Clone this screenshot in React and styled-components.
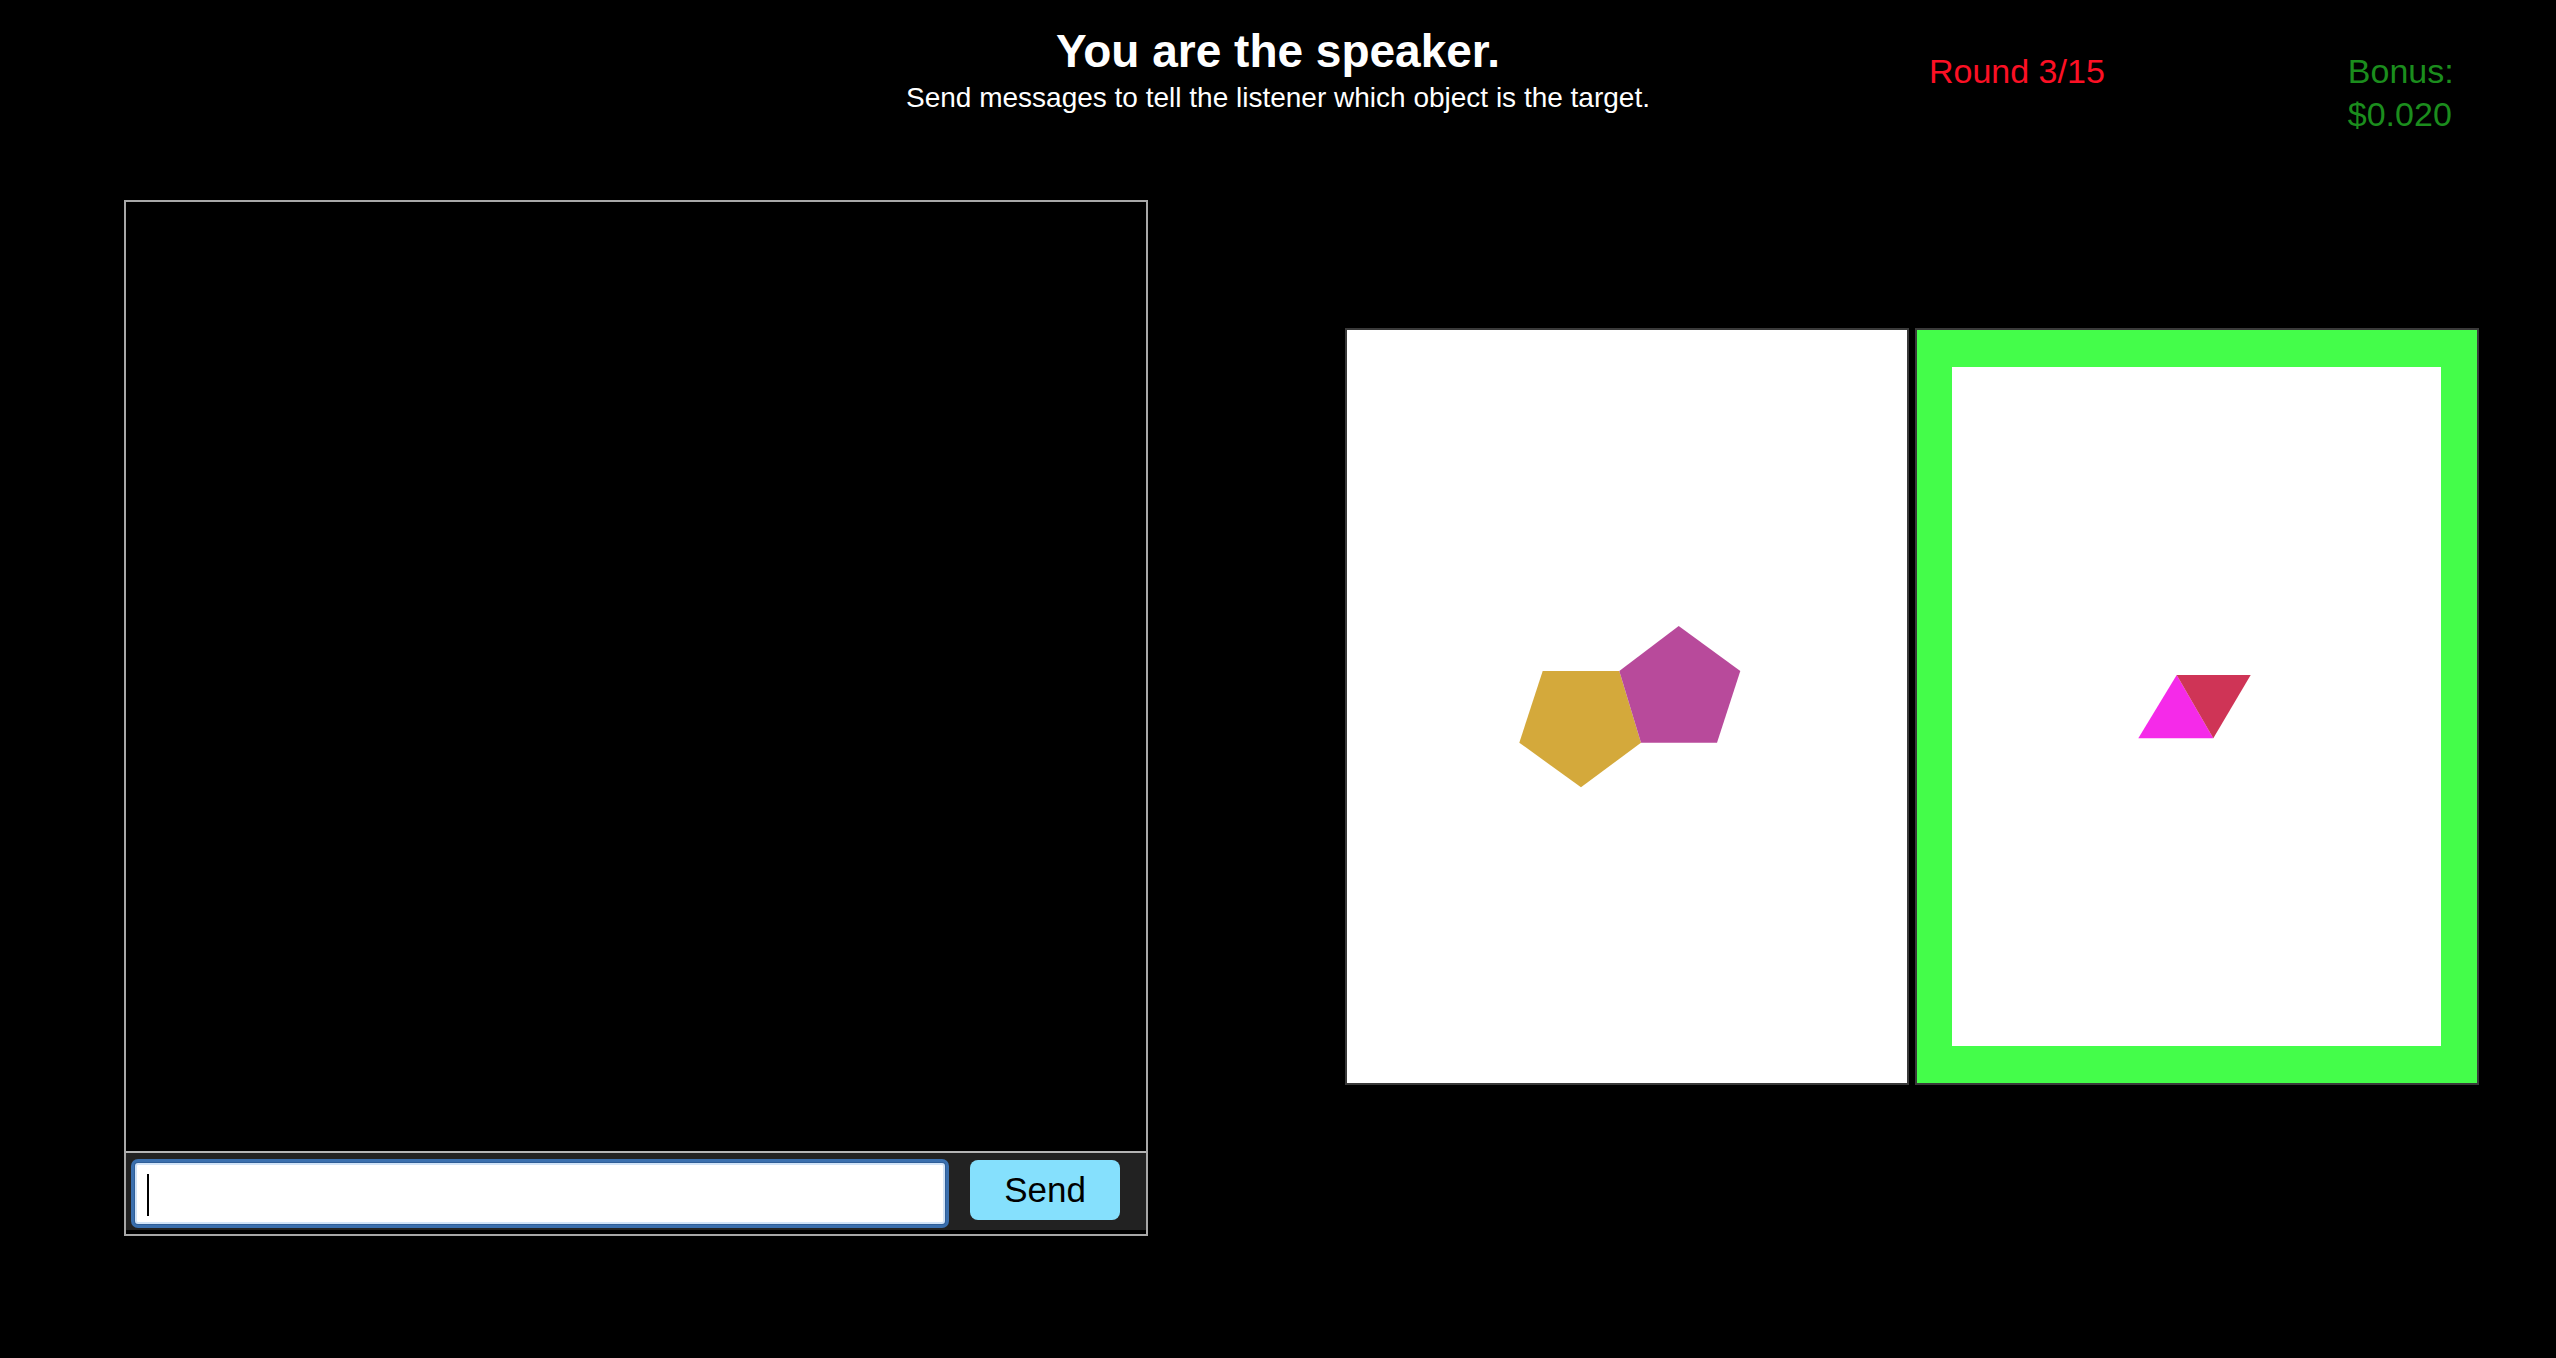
import styled, {createGlobalStyle} from "styled-components";

const GlobalStyle = createGlobalStyle`
    html, body {
        margin: 0;
        padding: 0;
        background: #000;
    }

    body {
        font-family: "Liberation Sans", Arial, Helvetica, sans-serif;
        color: #fff;
        min-height: 1358px;
    }
`;

const Page = styled.div`
    width: 2556px;
    min-height: 1358px;
    background: #000;
`;

const Header = styled.header`
    display: grid;
    grid-template-columns: 1fr auto 1fr;
    height: 200px;
`;

const TitleBlock = styled.div`
    grid-column: 2;
    padding-top: 25px;
    text-align: center;
`;

const Title = styled.h1`
    margin: 0;
    font-size: 46px;
    line-height: 53px;
    font-weight: 700;
    color: #fff;
`;

const Subtitle = styled.p`
    margin: 4px 0 0;
    font-size: 28px;
    line-height: 32px;
    color: #fff;
`;

const Status = styled.div`
    display: flex;
    align-items: flex-start;
    padding-top: 50px;
    padding-left: 279px;
    gap: 243px;
`;

const StatusText = styled.div`
    font-size: 34px;
    line-height: 43px;
    color: ${({$tone}) => $tone === "bonus" ? "#1b8d1d" : "#fc1024"};
    width: ${({$width}) => $width};
`;

const Main = styled.main`
    display: flex;
    align-items: flex-start;
    gap: 197px;
    padding-left: 124px;
`;

const ChatBox = styled.section`
    box-sizing: border-box;
    width: 1024px;
    height: 1036px;
    border: 2px solid #a8a8a8;
    display: flex;
    flex-direction: column;
    padding-bottom: 4px;
`;

const Messages = styled.div`
    flex: 1;
    background: #000;
`;

const ChatFooter = styled.form`
    box-sizing: border-box;
    height: 79px;
    border-top: 2px solid #b5b5b5;
    background: #222;
    display: flex;
    align-items: flex-start;
    gap: 25px;
    padding: 7px 26px 0 9px;
    margin: 0;
`;

const InputWrap = styled.div`
    position: relative;
    flex: 1;
    margin-top: 3px;
`;

const TextInput = styled.input`
    box-sizing: border-box;
    display: block;
    width: 100%;
    height: 61px;
    border: 2px solid #d2e4f8;
    border-radius: 3px;
    background: #fff;
    box-shadow: 0 0 0 1px #2f5e98, 0 0 0 4px #3a6fae;
    outline: none;
    padding: 0 10px;
    font-family: "Liberation Sans", Arial, sans-serif;
    font-size: 34px;
    caret-color: transparent;
`;

const Caret = styled.span`
    position: absolute;
    left: 12px;
    top: 11px;
    width: 2px;
    height: 42px;
    background: #000;
`;

const SendButton = styled.button`
    width: 150px;
    height: 60px;
    border: none;
    border-radius: 8px;
    background: #85e0fd;
    color: #000;
    font-family: "Liberation Sans", Arial, sans-serif;
    font-size: 35px;
    padding: 0;
    cursor: pointer;
`;

const Cards = styled.div`
    display: flex;
    gap: 6px;
    margin-top: 128px;
`;

const Card = styled.div`
    box-sizing: border-box;
    width: 564px;
    height: 757px;
    border: 2px solid #3a3a3a;
    background: #fff;
    display: flex;
`;

const TargetFrame = styled.div`
    flex: 1;
    border: 36px solid #44fd4a;
    border-top-width: 37px;
    border-bottom-width: 37px;
    border-left-width: 35px;
    background: #fff;
    display: flex;
`;

const Drawing = styled.svg`
    flex: 1;
    display: block;
`;

function Shapes({shapes, width, height}) {
  return (
    <Drawing viewBox={`0 0 ${width} ${height}`} preserveAspectRatio={"xMinYMin meet"}>
      {shapes.map((s, i) => (
        <polygon key={i} points={s.points} fill={s.fill}/>
      ))}
    </Drawing>
  )
}

const distractor = [
  {points: "195.7,341 272.3,341 294,412.7 234,457.3 172.3,412.7", fill: "#d4a93b"},
  {points: "331.7,296 393.3,341 370,412.7 294,412.7 272.3,341", fill: "#b84a9b"},
];

const target = [
  {points: "224.7,308 261.3,371.3 186.3,371.3", fill: "#f52ae9"},
  {points: "224.7,308 298.7,308 261.3,371.3", fill: "#cf3456"},
];

function App() {
  return (
    <Page>
      <GlobalStyle/>
      <Header>
        <TitleBlock>
          <Title>You are the speaker.</Title>
          <Subtitle>Send messages to tell the listener which object is the target.</Subtitle>
        </TitleBlock>
        <Status>
          <StatusText $tone={"round"}>Round 3/15</StatusText>
          <StatusText $tone={"bonus"} $width={"130px"}>Bonus: $0.020</StatusText>
        </Status>
      </Header>
      <Main>
        <ChatBox>
          <Messages/>
          <ChatFooter onSubmit={e => e.preventDefault()}>
            <InputWrap>
              <TextInput type={"text"}/>
              <Caret/>
            </InputWrap>
            <SendButton type={"submit"}>Send</SendButton>
          </ChatFooter>
        </ChatBox>
        <Cards>
          <Card>
            <Shapes shapes={distractor} width={560} height={753}/>
          </Card>
          <Card>
            <TargetFrame>
              <Shapes shapes={target} width={489} height={679}/>
            </TargetFrame>
          </Card>
        </Cards>
      </Main>
    </Page>
  )
}

export default App
